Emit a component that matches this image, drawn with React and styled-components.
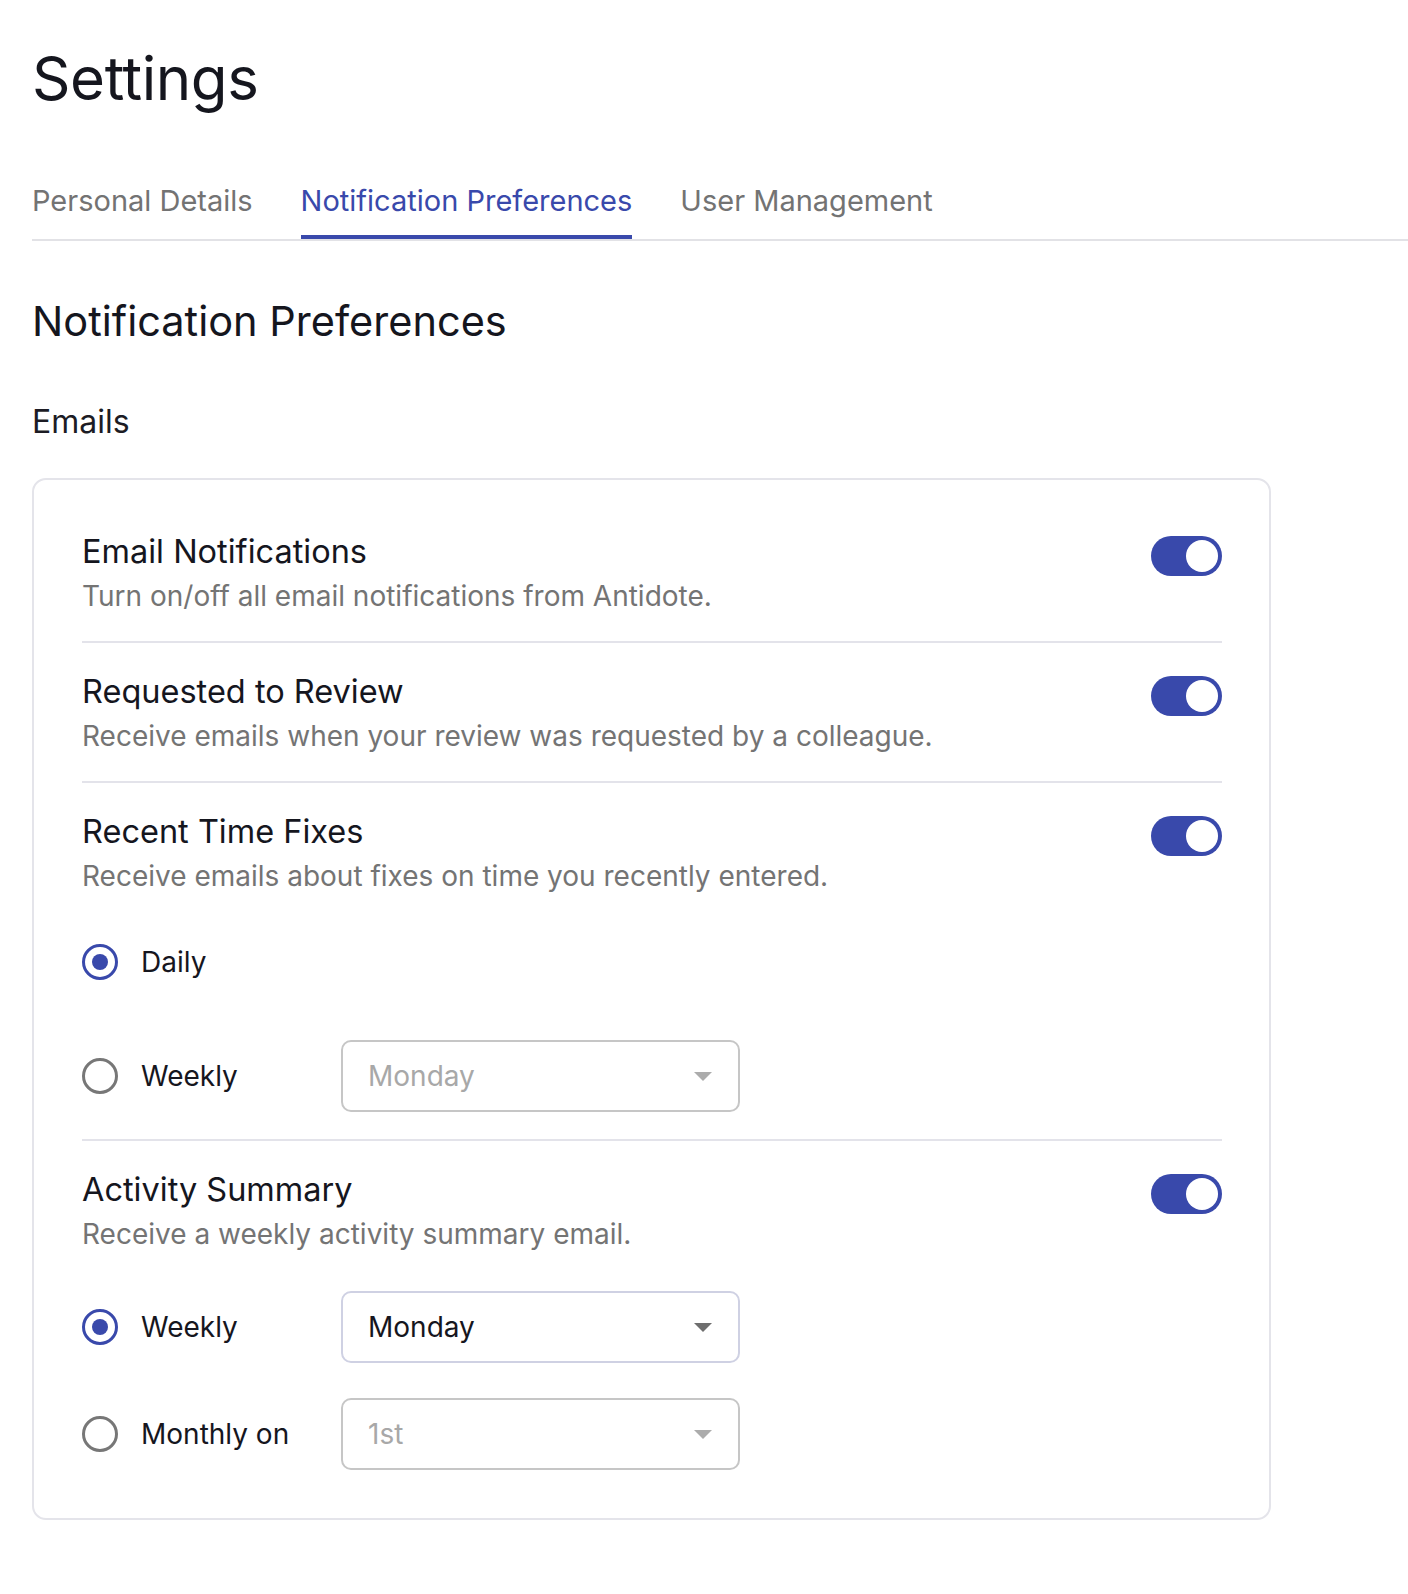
import React from 'react'
import styled, { createGlobalStyle } from 'styled-components'

const GlobalStyle = createGlobalStyle`
  body {
    margin: 0;
    background: #fff;
    font-family: Inter, "Noto Sans", sans-serif;
    color: #16161e;
  }
`

const Page = styled.div`
  padding: 42px 0 60px 32px;
`

const Title = styled.h1`
  margin: 0;
  font-size: 60px;
  line-height: 72px;
  font-weight: 400;
  letter-spacing: -0.4px;
  color: #15161e;
`

const TabBar = styled.div`
  margin-top: 67px;
  display: flex;
  gap: 48px;
  border-bottom: 2px solid #e2e2e6;
`

const Tab = styled.div`
  font-size: 29px;
  line-height: 40px;
  padding-bottom: 14px;
  border-bottom: 4px solid ${p => (p.active ? '#3949ab' : 'transparent')};
  color: ${p => (p.active ? '#3949ab' : '#737373')};
  cursor: pointer;
`

const Heading = styled.h2`
  margin: 56px 0 0;
  font-size: 41.5px;
  line-height: 48px;
  font-weight: 400;
  color: #15161e;
`

const SubHeading = styled.h3`
  margin: 57px 0 0;
  font-size: 32px;
  line-height: 40px;
  font-weight: 400;
  color: #1c1c24;
`

const Card = styled.div`
  margin-top: 36px;
  width: 1239px;
  box-sizing: border-box;
  border: 2px solid #e4e4ea;
  border-radius: 14px;
  padding: 23px 47px 21px 48px;
`

const Row = styled.div`
  display: flex;
  justify-content: space-between;
  align-items: flex-start;
  padding: 29px 0 27px;
  border-bottom: ${p => (p.last ? 'none' : '2px solid #e3e3ea')};
`

const RowBody = styled.div`
  display: flex;
  flex-direction: column;
`

const RowTitle = styled.div`
  font-size: 32.5px;
  line-height: 40px;
  color: #15161e;
`

const RowDesc = styled.div`
  margin-top: 6px;
  font-size: 28px;
  line-height: 36px;
  color: #747474;
`

const Switch = styled.div`
  margin-top: 4px;
  width: 71px;
  height: 40px;
  box-sizing: border-box;
  padding: 4px;
  border-radius: 20px;
  background: ${p => (p.on ? '#3949ab' : '#c4c4c4')};
  display: flex;
  justify-content: ${p => (p.on ? 'flex-end' : 'flex-start')};
  flex-shrink: 0;
`

const Knob = styled.div`
  width: 32px;
  height: 32px;
  border-radius: 50%;
  background: #fff;
`

const Options = styled.div`
  margin-top: ${p => p.top}px;
  display: flex;
  flex-direction: column;
  gap: ${p => p.gap}px;
`

const OptionRow = styled.div`
  display: flex;
  align-items: center;
  min-height: 72px;
`

const OptionLabel = styled.label`
  width: 259px;
  display: flex;
  align-items: center;
  gap: 23px;
  font-size: 28px;
  line-height: 40px;
  color: #16161e;
  cursor: pointer;
`

const Radio = styled.span`
  width: 36px;
  height: 36px;
  box-sizing: border-box;
  border-radius: 50%;
  border: 3.5px solid ${p => (p.checked ? '#3949ab' : '#777')};
  display: flex;
  align-items: center;
  justify-content: center;
  flex-shrink: 0;
  &::after {
    content: '';
    width: 16px;
    height: 16px;
    border-radius: 50%;
    background: ${p => (p.checked ? '#3949ab' : 'transparent')};
  }
`

const Select = styled.div`
  width: 399px;
  height: 72px;
  box-sizing: border-box;
  border: 2px solid ${p => (p.disabled ? '#c6c6c6' : '#cfd1e3')};
  border-radius: 10px;
  padding: 0 26px 0 25px;
  display: flex;
  align-items: center;
  justify-content: space-between;
  font-size: 28px;
  color: ${p => (p.disabled ? '#a8a8a8' : '#16161e')};
`

const Arrow = ({ disabled }) => (
  <svg width="18" height="9" viewBox="0 0 18 9">
    <polygon points="0,0 18,0 9,9" fill={disabled ? '#acacac' : '#6e6e6e'} />
  </svg>
)

const Toggle = ({ on }) => (
  <Switch on={on}>
    <Knob />
  </Switch>
)

const Option = ({ label, checked, select, disabled }) => (
  <OptionRow>
    <OptionLabel>
      <Radio checked={checked} />
      {label}
    </OptionLabel>
    {select && (
      <Select disabled={disabled}>
        {select}
        <Arrow disabled={disabled} />
      </Select>
    )}
  </OptionRow>
)

const App = () => {
  return (
    <Page>
      <GlobalStyle />
      <Title>Settings</Title>
      <TabBar>
        <Tab>Personal Details</Tab>
        <Tab active>Notification Preferences</Tab>
        <Tab>User Management</Tab>
      </TabBar>
      <Heading>Notification Preferences</Heading>
      <SubHeading>Emails</SubHeading>
      <Card>
        <Row>
          <RowBody>
            <RowTitle>Email Notifications</RowTitle>
            <RowDesc>Turn on/off all email notifications from Antidote.</RowDesc>
          </RowBody>
          <Toggle on />
        </Row>
        <Row>
          <RowBody>
            <RowTitle>Requested to Review</RowTitle>
            <RowDesc>Receive emails when your review was requested by a colleague.</RowDesc>
          </RowBody>
          <Toggle on />
        </Row>
        <Row>
          <RowBody>
            <RowTitle>Recent Time Fixes</RowTitle>
            <RowDesc>Receive emails about fixes on time you recently entered.</RowDesc>
            <Options top={32} gap={42}>
              <Option label="Daily" checked />
              <Option label="Weekly" select="Monday" disabled />
            </Options>
          </RowBody>
          <Toggle on />
        </Row>
        <Row last>
          <RowBody>
            <RowTitle>Activity Summary</RowTitle>
            <RowDesc>Receive a weekly activity summary email.</RowDesc>
            <Options top={39} gap={35}>
              <Option label="Weekly" checked select="Monday" />
              <Option label="Monthly on" select="1st" disabled />
            </Options>
          </RowBody>
          <Toggle on />
        </Row>
      </Card>
    </Page>
  )
}

export default App
